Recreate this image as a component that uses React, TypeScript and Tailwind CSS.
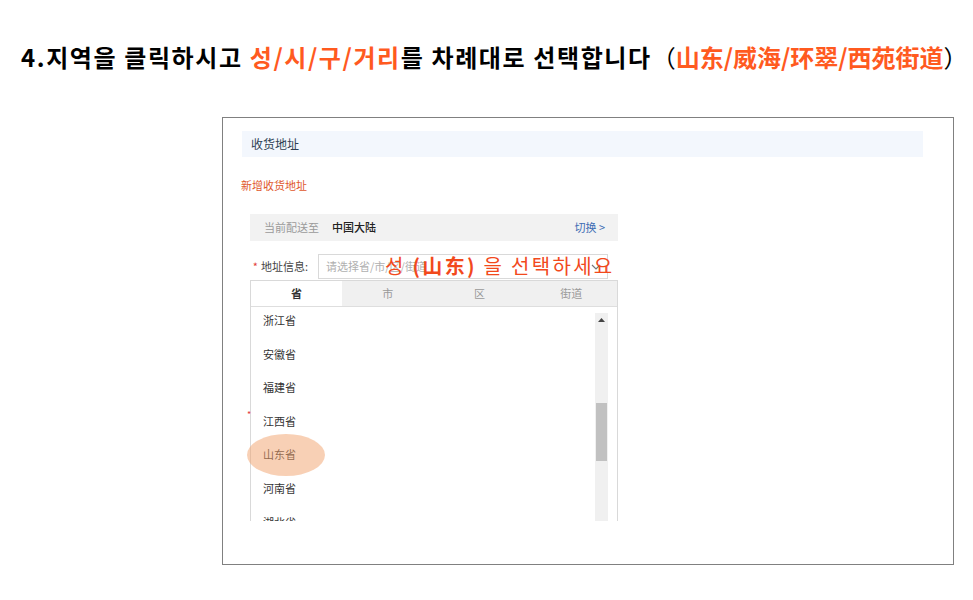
import React from "react";

const cjk = { fontFamily: '"Noto Sans CJK SC", "Noto Sans CJK KR", sans-serif' };
const kr = { fontFamily: '"Noto Sans CJK KR", "Noto Sans CJK SC", sans-serif' };

const provinces = ["浙江省", "安徽省", "福建省", "江西省", "山东省", "河南省", "湖北省"];

export default function App() {
  return (
    <div className="relative w-[973px] h-[600px] bg-white overflow-hidden" style={kr}>
      {/* Title */}
      <div className="pt-[40px] pl-[21px] h-[74px] text-[24px] leading-[34px] font-bold text-black whitespace-nowrap">
        <span className="tracking-[1.6px]">4.지역을 클릭하시고 </span>
        <span className="text-[#ff5a1f] tracking-[1.6px]">성/시/구/거리</span>
        <span className="tracking-[1.6px]">를 차례대로 선택합니다</span>
        <span className="font-normal" style={cjk}>（</span>
        <span className="text-[#ff5a1f]" style={cjk}>山东/威海/环翠/西苑街道</span>
        <span className="font-normal" style={cjk}>）</span>
      </div>

      {/* Frame */}
      <div className="relative ml-[222px] mt-[43px] w-[732px] h-[448px] border border-[#808080] flex flex-col" style={cjk}>
        {/* header */}
        <div className="ml-[19px] mt-[13px] w-[681px] h-[26px] shrink-0 bg-[#f3f7fd] flex items-center pl-[9px] text-[12px] text-[#2e3f52]">
          收货地址
        </div>
        {/* new address */}
        <div className="ml-[18px] mt-[20px] h-[16px] shrink-0 leading-[16px] text-[11px] text-[#e0572c]">新增收货地址</div>

        {/* current delivery */}
        <div className="ml-[27px] mt-[21px] w-[368px] h-[27px] shrink-0 bg-[#f2f2f2] flex items-center text-[11px]">
          <span className="ml-[14px] text-[#9a9a9a]">当前配送至</span>
          <span className="ml-[13px] text-[#222] font-medium">中国大陆</span>
          <span className="ml-auto mr-[13px] text-[#3c6cb4]">切换 &gt;</span>
        </div>

        {/* address row */}
        <div className="ml-[27px] mt-[13px] flex items-center h-[25px] shrink-0">
          <div className="w-[68px] flex justify-end pr-[10px] text-[11px] text-[#444]">
            <span className="text-[#e23b3b] mr-[3px]">*</span>地址信息:
          </div>
          <div className="w-[290px] h-[25px] border border-[#d9d9d9] bg-white flex items-center pl-[7px] pr-[6px] text-[11px] text-[#b0b0b0]">
            <span>请选择省/市/区/街道</span>
            <svg className="ml-auto" width="10" height="6" viewBox="0 0 10 6">
              <path d="M1 1 L5 5 L9 1" fill="none" stroke="#777" strokeWidth="1.2" />
            </svg>
          </div>
        </div>

        {/* dropdown panel */}
        <div className="ml-[27px] mt-[1px] w-[368px] h-[241px] shrink-0 border-l border-r border-t border-[#d9d9d9] bg-white overflow-hidden flex flex-col">
          <div className="flex h-[26px] shrink-0 border-b border-[#dedede] text-[11px]">
            <div className="w-[91px] bg-white flex items-center justify-center font-bold text-[#333]">省</div>
            <div className="flex-1 bg-[#f0f0f0] flex items-center justify-center text-[#999]">市</div>
            <div className="flex-1 bg-[#f0f0f0] flex items-center justify-center text-[#999]">区</div>
            <div className="flex-1 bg-[#f0f0f0] flex items-center justify-center text-[#999]">街道</div>
          </div>
          <div className="flex flex-1 min-h-0 overflow-hidden">
            <div className="flex-1 flex flex-col">
              {provinces.map((p) => (
                <div key={p} className="h-[33.6px] shrink-0 pt-[6px] pl-[12px] text-[11px] leading-[14px] text-[#333]">
                  {p}
                </div>
              ))}
            </div>
            <div className="w-[13px] mt-[6px] mr-[9px] bg-[#f0f0f0] flex flex-col items-center">
              <svg className="mt-[5px] shrink-0" width="7" height="4" viewBox="0 0 7 4">
                <path d="M0 4 L3.5 0 L7 4 Z" fill="#444" />
              </svg>
              <div className="mt-[81px] w-[11px] h-[58px] shrink-0 bg-[#c1c1c1]" />
            </div>
          </div>
        </div>

        {/* overlays */}
        <div className="absolute left-[24px] top-[292px] text-[9px] leading-[9px] text-[#e23b3b]">*</div>
        <div className="absolute left-[24px] top-[316px] w-[78px] h-[42px] rounded-[50%] bg-[#f2a26c] opacity-50" />
        <div
          className="absolute left-[162px] top-[134px] text-[20px] leading-[28px] text-[#f2491c] whitespace-nowrap tracking-[2.3px]"
          style={kr}
        >
          성 <span className="font-semibold">(山东)</span> 을 선택하세요
        </div>
      </div>
    </div>
  );
}
